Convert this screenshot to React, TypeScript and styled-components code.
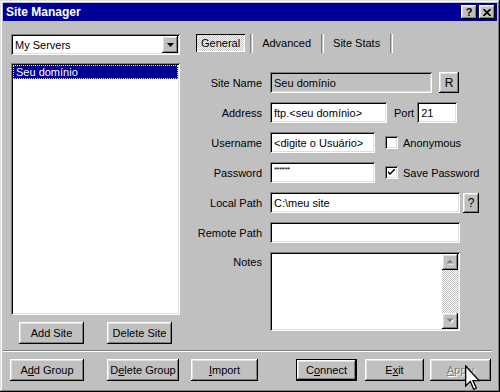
import React from 'react'
import styled, { createGlobalStyle, css } from 'styled-components'

const face = '#c0c0c0'
const navy = '#000099'

const GlobalStyle = createGlobalStyle`
  html, body { margin: 0; padding: 0; background: ${face}; }
  body {
    font-family: "Liberation Sans", Arial, sans-serif;
    font-size: 11px;
    color: #000;
  }
`

const raised = css`
  box-shadow: inset -1px -1px #000, inset 1px 1px #fff, inset -2px -2px #808080, inset 2px 2px #dfdfdf;
`
const sunken = css`
  box-shadow: inset 1px 1px #808080, inset -1px -1px #fff, inset 2px 2px #000, inset -2px -2px #dfdfdf;
`
const dither = css`
  background: repeating-conic-gradient(#fff 0% 25%, ${face} 0% 50%) 0 0 / 2px 2px;
`

const Window = styled.div`
  position: relative;
  width: 500px;
  height: 392px;
  box-sizing: border-box;
  padding: 3px;
  background: ${face};
  box-shadow: inset -1px -1px #000, inset 1px 1px #dfdfdf, inset -2px -2px #808080, inset 2px 2px #fff;
  display: flex;
  flex-direction: column;
  overflow: hidden;
`

const TitleBar = styled.div`
  height: 18px;
  background: ${navy};
  display: flex;
  align-items: center;
  justify-content: space-between;
  padding: 0 2px 0 3px;
`

const Title = styled.span`
  color: #fff;
  font-weight: bold;
  font-size: 12px;
`

const CaptionButtons = styled.div`
  display: flex;
  gap: 2px;
`

const CaptionButton = styled.div`
  width: 16px;
  height: 14px;
  background: ${face};
  ${raised};
  display: flex;
  align-items: center;
  justify-content: center;
  font-weight: bold;
  font-size: 11px;
  line-height: 14px;
`

const Body = styled.div`
  flex: 1;
  display: flex;
  padding: 13px 0 0 8px;
`

const LeftColumn = styled.div`
  width: 169px;
  display: flex;
  flex-direction: column;
`

const Combo = styled.div`
  height: 21px;
  background: #fff;
  ${sunken};
  display: flex;
  align-items: center;
  justify-content: space-between;
  padding: 0 2px 0 4px;
`

const DropButton = styled.div`
  width: 16px;
  height: 17px;
  background: ${face};
  ${raised};
  display: flex;
  align-items: center;
  justify-content: center;
`

const ListBox = styled.div`
  margin-top: 8px;
  height: 252px;
  background: #fff;
  ${sunken};
  padding: 2px;
  box-sizing: border-box;
`

const ListItem = styled.div<{ $selected?: boolean }>`
  height: 14px;
  line-height: 12px;
  padding: 0 2px;
  box-sizing: border-box;
  ${p => p.$selected && css`
    background: ${navy};
    color: #fff;
    border: 1px dotted #ffff00;
  `}
`

const ButtonRow = styled.div`
  margin-top: 7px;
  display: flex;
  justify-content: space-between;
  padding: 0 8px;
`

const Button = styled.div<{ $w: number; $ml?: number; $default?: boolean; $disabled?: boolean }>`
  width: ${p => p.$w}px;
  height: 22px;
  margin-left: ${p => p.$ml ?? 0}px;
  box-sizing: border-box;
  background: ${face};
  display: flex;
  align-items: center;
  justify-content: center;
  ${raised};
  ${p => p.$default && css`
    box-shadow: inset 0 0 0 1px #000, inset -2px -2px #000, inset 2px 2px #fff, inset -3px -3px #808080, inset 3px 3px #dfdfdf;
  `}
  ${p => p.$disabled && css`
    color: #808080;
    text-shadow: 1px 1px #fff;
  `}
  u { text-decoration: underline; text-underline-offset: 1px; }
`

const RightColumn = styled.div`
  margin-left: 8px;
  flex: 1;
  display: flex;
  flex-direction: column;
`

const TabStrip = styled.div`
  height: 18px;
  padding-left: 8px;
  display: flex;
  align-items: center;
`

const Tab = styled.div<{ $active?: boolean }>`
  height: 18px;
  line-height: 18px;
  padding: 0 5px;
  box-sizing: border-box;
  ${p => p.$active && css`
    ${dither};
    box-shadow: inset 1px 1px #000, inset -1px -1px #fff;
  `}
`

const TabDivider = styled.div`
  width: 1px;
  height: 19px;
  margin: 0 4px 0 5px;
  border-left: 1px solid #808080;
  border-right: 1px solid #fff;
`

const Form = styled.div`
  margin-top: 20px;
  display: grid;
  grid-template-columns: 74px auto;
  column-gap: 8px;
  row-gap: 9px;
  align-items: center;
`

const Label = styled.div<{ $top?: boolean }>`
  text-align: right;
  ${p => p.$top && css`
    align-self: start;
    padding-top: 4px;
  `}
`

const FieldRow = styled.div<{ $gap: number }>`
  display: flex;
  align-items: center;
  gap: ${p => p.$gap}px;
`

const Field = styled.div<{ $w: number; $h?: number; $readOnly?: boolean }>`
  width: ${p => p.$w}px;
  height: ${p => p.$h ?? 21}px;
  box-sizing: border-box;
  background: ${p => (p.$readOnly ? face : '#fff')};
  ${sunken};
  padding: 0 3px 0 4px;
  display: flex;
  align-items: center;
  white-space: nowrap;
  overflow: hidden;
`

const Masked = styled.span`
  font-size: 8px;
  align-self: flex-start;
  margin-top: 3px;
  letter-spacing: -0.5px;
`

const SmallButton = styled.div<{ $w: number; $h: number }>`
  width: ${p => p.$w}px;
  height: ${p => p.$h}px;
  background: ${face};
  ${raised};
  display: flex;
  align-items: center;
  justify-content: center;
  font-size: 12px;
`

const CheckItem = styled.div`
  display: flex;
  align-items: center;
  gap: 5px;
`

const CheckBox = styled.div`
  width: 13px;
  height: 13px;
  background: #fff;
  ${sunken};
  display: flex;
  align-items: center;
  justify-content: center;
`

const NotesBox = styled(Field)`
  align-items: stretch;
  justify-content: flex-end;
  padding: 2px;
`

const ScrollBar = styled.div`
  width: 16px;
  display: flex;
  flex-direction: column;
`

const ScrollArrow = styled.div`
  height: 16px;
  background: ${face};
  ${raised};
  display: flex;
  align-items: center;
  justify-content: center;
`

const ScrollTrack = styled.div`
  flex: 1;
  ${dither};
`

const Separator = styled.div`
  margin: 0 5px 0 0;
  border-top: 1px solid #808080;
  border-bottom: 1px solid #fff;
`

const Footer = styled.div`
  display: flex;
  padding: 7px 0 8px 7px;
`

const Cursor = styled.svg`
  position: absolute;
  left: 465px;
  top: 365px;
`

const DownTriangle = ({ color = '#000' }: { color?: string }) => (
  <svg width="7" height="4" viewBox="0 0 7 4">
    <path d="M0 0 H7 L3.5 4 Z" fill={color} />
  </svg>
)

const ScrollTriangle = ({ up }: { up?: boolean }) => (
  <svg width="9" height="6" viewBox="0 0 9 6">
    {up ? (
      <>
        <path d="M1.5 5.5 H8.5 L5 1.5 Z" fill="#fff" />
        <path d="M0.5 4.5 H7.5 L4 0.5 Z" fill="#808080" />
      </>
    ) : (
      <>
        <path d="M1.5 1.5 H8.5 L5 5.5 Z" fill="#fff" />
        <path d="M0.5 0.5 H7.5 L4 4.5 Z" fill="#808080" />
      </>
    )}
  </svg>
)

const App = () => {
  return (
    <>
      <GlobalStyle />
      <Window>
        <TitleBar>
          <Title>Site Manager</Title>
          <CaptionButtons>
            <CaptionButton>?</CaptionButton>
            <CaptionButton>
              <svg width="8" height="7" viewBox="0 0 8 7">
                <path d="M0.5 0 L7.5 7 M7.5 0 L0.5 7" stroke="#000" strokeWidth="1.6" />
              </svg>
            </CaptionButton>
          </CaptionButtons>
        </TitleBar>

        <Body>
          <LeftColumn>
            <Combo>
              <span>My Servers</span>
              <DropButton>
                <DownTriangle />
              </DropButton>
            </Combo>
            <ListBox>
              <ListItem $selected>Seu domínio</ListItem>
            </ListBox>
            <ButtonRow>
              <Button $w={65}>Add Site</Button>
              <Button $w={65}>Delete Site</Button>
            </ButtonRow>
          </LeftColumn>

          <RightColumn>
            <TabStrip>
              <Tab $active>General</Tab>
              <TabDivider />
              <Tab>Advanced</Tab>
              <TabDivider />
              <Tab>Site Stats</Tab>
              <TabDivider />
            </TabStrip>

            <Form>
              <Label>Site Name</Label>
              <FieldRow $gap={7}>
                <Field $w={162} $readOnly>Seu domínio</Field>
                <SmallButton $w={20} $h={21}>R</SmallButton>
              </FieldRow>

              <Label>Address</Label>
              <FieldRow $gap={7}>
                <Field $w={117}>ftp.&lt;seu domínio&gt;</Field>
                <span>Port</span>
                <Field $w={40} style={{ marginLeft: -4 }}>21</Field>
              </FieldRow>

              <Label>Username</Label>
              <FieldRow $gap={10}>
                <Field $w={105}>&lt;digite o Usuário&gt;</Field>
                <CheckItem>
                  <CheckBox />
                  <span>Anonymous</span>
                </CheckItem>
              </FieldRow>

              <Label>Password</Label>
              <FieldRow $gap={10}>
                <Field $w={105}>
                  <Masked>******</Masked>
                </Field>
                <CheckItem>
                  <CheckBox>
                    <svg width="7" height="7" viewBox="0 0 7 7">
                      <path d="M0 2 L0 4 L2 6 L7 1 L7 -1 L2 4 Z" fill="#000" />
                    </svg>
                  </CheckBox>
                  <span>Save Password</span>
                </CheckItem>
              </FieldRow>

              <Label>Local Path</Label>
              <FieldRow $gap={3}>
                <Field $w={190}>C:\meu site</Field>
                <SmallButton $w={16} $h={20}>?</SmallButton>
              </FieldRow>

              <Label>Remote Path</Label>
              <FieldRow $gap={3}>
                <Field $w={190} />
              </FieldRow>

              <Label $top>Notes</Label>
              <FieldRow $gap={3}>
                <NotesBox $w={190} $h={79}>
                  <ScrollBar>
                    <ScrollArrow>
                      <ScrollTriangle up />
                    </ScrollArrow>
                    <ScrollTrack />
                    <ScrollArrow>
                      <ScrollTriangle />
                    </ScrollArrow>
                  </ScrollBar>
                </NotesBox>
              </FieldRow>
            </Form>
          </RightColumn>
        </Body>

        <Separator />

        <Footer>
          <Button $w={74}>A<u>d</u>d Group</Button>
          <Button $w={72} $ml={23}>D<u>e</u>lete Group</Button>
          <Button $w={67} $ml={12}><u>I</u>mport</Button>
          <Button $w={61} $ml={38} $default>C<u>o</u>nnect</Button>
          <Button $w={59} $ml={8}>E<u>x</u>it</Button>
          <Button $w={61} $ml={6} $disabled><u>A</u>pply</Button>
        </Footer>

        <Cursor width="16" height="26" viewBox="0 0 12 19">
          <path
            d="M0.5 0.5 V15.5 L4 12 L6.5 18 L8.5 17 L6 11.5 H10.5 Z"
            fill="#fff"
            stroke="#000"
            strokeWidth="1"
            strokeLinejoin="miter"
          />
        </Cursor>
      </Window>
    </>
  )
}

export default App
